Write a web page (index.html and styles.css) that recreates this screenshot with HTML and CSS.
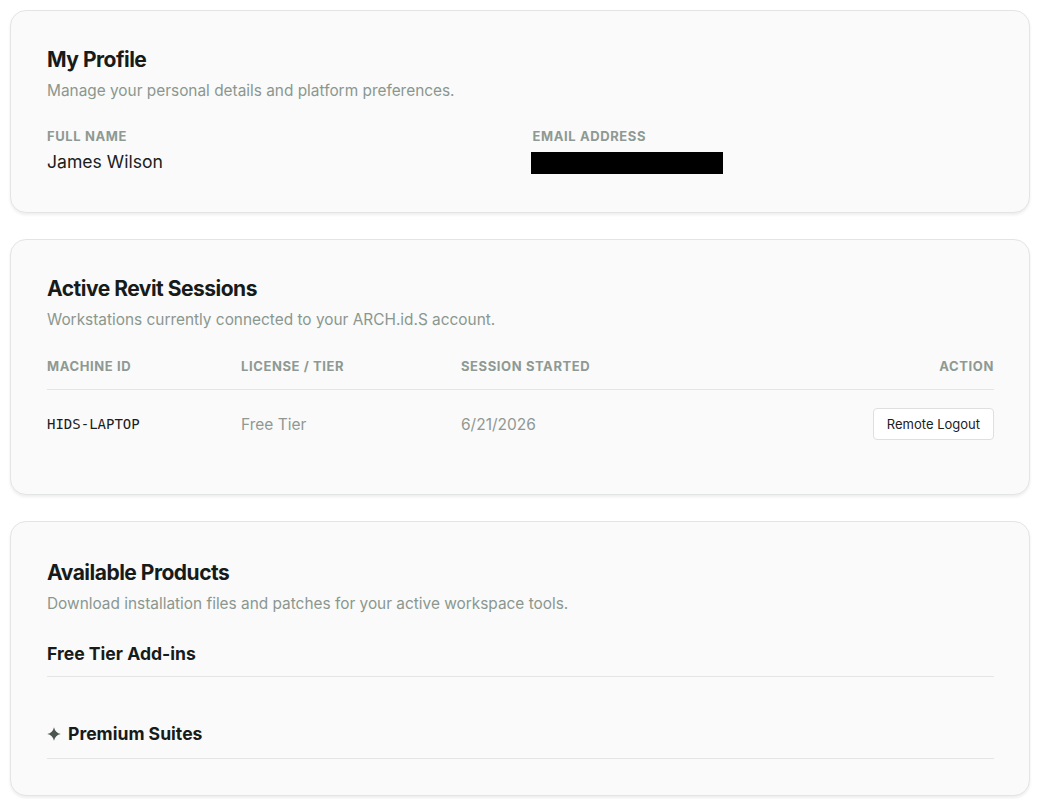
FILE: index.html
```html
<!DOCTYPE html>
<html lang="en">
<head>
  <meta charset="UTF-8" />
  <meta name="viewport" content="width=device-width, initial-scale=1.0"/>
  <title>Account – ARCH.id.S</title>
  <link rel="stylesheet" href="styles.css">
</head>
<body>
  <div class="page">

    <section class="card">
      <h2 class="card-title">My Profile</h2>
      <p class="card-sub">Manage your personal details and platform preferences.</p>

      <div class="fields">
        <div class="field">
          <div class="label">Full Name</div>
          <div class="value">James Wilson</div>
        </div>
        <div class="field">
          <div class="label">Email Address</div>
          <div class="value"><span class="redacted"></span></div>
        </div>
      </div>
    </section>

    <section class="card">
      <h2 class="card-title">Active Revit Sessions</h2>
      <p class="card-sub">Workstations currently connected to your ARCH.id.S account.</p>

      <div class="sessions">
        <div class="sess-row sess-head">
          <div class="label">Machine ID</div>
          <div class="label">License / Tier</div>
          <div class="label">Session Started</div>
          <div class="label right">Action</div>
        </div>
        <div class="sess-row sess-item">
          <div class="mono">HIDS-LAPTOP</div>
          <div class="muted">Free Tier</div>
          <div class="muted">6/21/2026</div>
          <div class="right"><button class="btn">Remote Logout</button></div>
        </div>
      </div>
    </section>

    <section class="card card-products">
      <h2 class="card-title">Available Products</h2>
      <p class="card-sub">Download installation files and patches for your active workspace tools.</p>

      <div class="group">
        <h3 class="group-title">Free Tier Add-ins</h3>
        <div class="group-list"></div>
      </div>

      <div class="group">
        <h3 class="group-title">
          <svg class="star" viewBox="0 0 14 14" width="14" height="14">
            <path d="M7 0.2 Q8.2 5.8 13.8 7 Q8.2 8.2 7 13.8 Q5.8 8.2 0.2 7 Q5.8 5.8 7 0.2 Z" fill="#4b5650"/>
          </svg>
          Premium Suites
        </h3>
      </div>
    </section>

  </div>
</body>
</html>
```

FILE: styles.css
```css
body {
  margin: 0;
  background: #fff;
  font-family: 'Inter', 'Liberation Sans', sans-serif;
  color: #1b201d;
}

.page {
  display: flex;
  flex-direction: column;
  gap: 26px;
  padding: 10px 9px 10px 10px;
}

.card {
  background: #fafafa;
  border: 1px solid #e3e5e4;
  border-radius: 16px;
  box-shadow: 0 2px 3px rgba(0,0,0,0.07);
  padding: 34px 35px 38px 36px;
}

.card-products {
  padding-top: 36px;
  padding-bottom: 36px;
}

.card-title {
  margin: 0;
  font-size: 21px;
  line-height: 30px;
  font-weight: 700;
  letter-spacing: -0.5px;
  color: #171b19;
}

.card-sub {
  margin: 5px 0 0;
  font-size: 15.4px;
  line-height: 22px;
  color: #8a978f;
}

.label {
  font-size: 13px;
  line-height: 18px;
  font-weight: 700;
  text-transform: uppercase;
  letter-spacing: 0.6px;
  color: #8e9993;
}

.fields {
  display: grid;
  grid-template-columns: 1fr 1fr;
  gap: 24px;
  margin-top: 25px;
}

.value {
  margin-top: 5px;
  font-size: 17.6px;
  line-height: 24px;
  color: #1b201d;
}

.redacted {
  display: inline-block;
  width: 192px;
  height: 22px;
  margin-left: -2px;
  vertical-align: middle;
  background: #000;
}

.sessions {
  margin-top: 26px;
}

.sess-row {
  display: grid;
  grid-template-columns: 194px 220px 1fr 200px;
  align-items: center;
}

.sess-head {
  padding-bottom: 14px;
  border-bottom: 1px solid #e4e6e5;
}

.sess-item {
  padding: 18px 0 16px;
}

.right {
  text-align: right;
}

.mono {
  font-family: 'DejaVu Sans Mono', monospace;
  font-size: 14px;
  color: #1b201d;
}

.muted {
  font-size: 15.5px;
  color: #8f9893;
}

.btn {
  height: 32px;
  padding: 0 13px;
  background: #fff;
  border: 1px solid #dedfdf;
  border-radius: 4px;
  font-family: inherit;
  font-size: 13px;
  color: #1b201d;
  cursor: pointer;
}

.btn:hover {
  background: #f3f4f4;
}

.group {
  margin-top: 27px;
}

.group + .group {
  margin-top: 45px;
}

.group-title {
  display: flex;
  align-items: center;
  gap: 7px;
  margin: 0;
  padding-bottom: 10px;
  border-bottom: 1px solid #e4e6e5;
  font-size: 17.6px;
  line-height: 24px;
  font-weight: 700;
  color: #171b19;
}

.group + .group .group-title {
  padding-bottom: 12px;
}

.star {
  flex: none;
}
```
